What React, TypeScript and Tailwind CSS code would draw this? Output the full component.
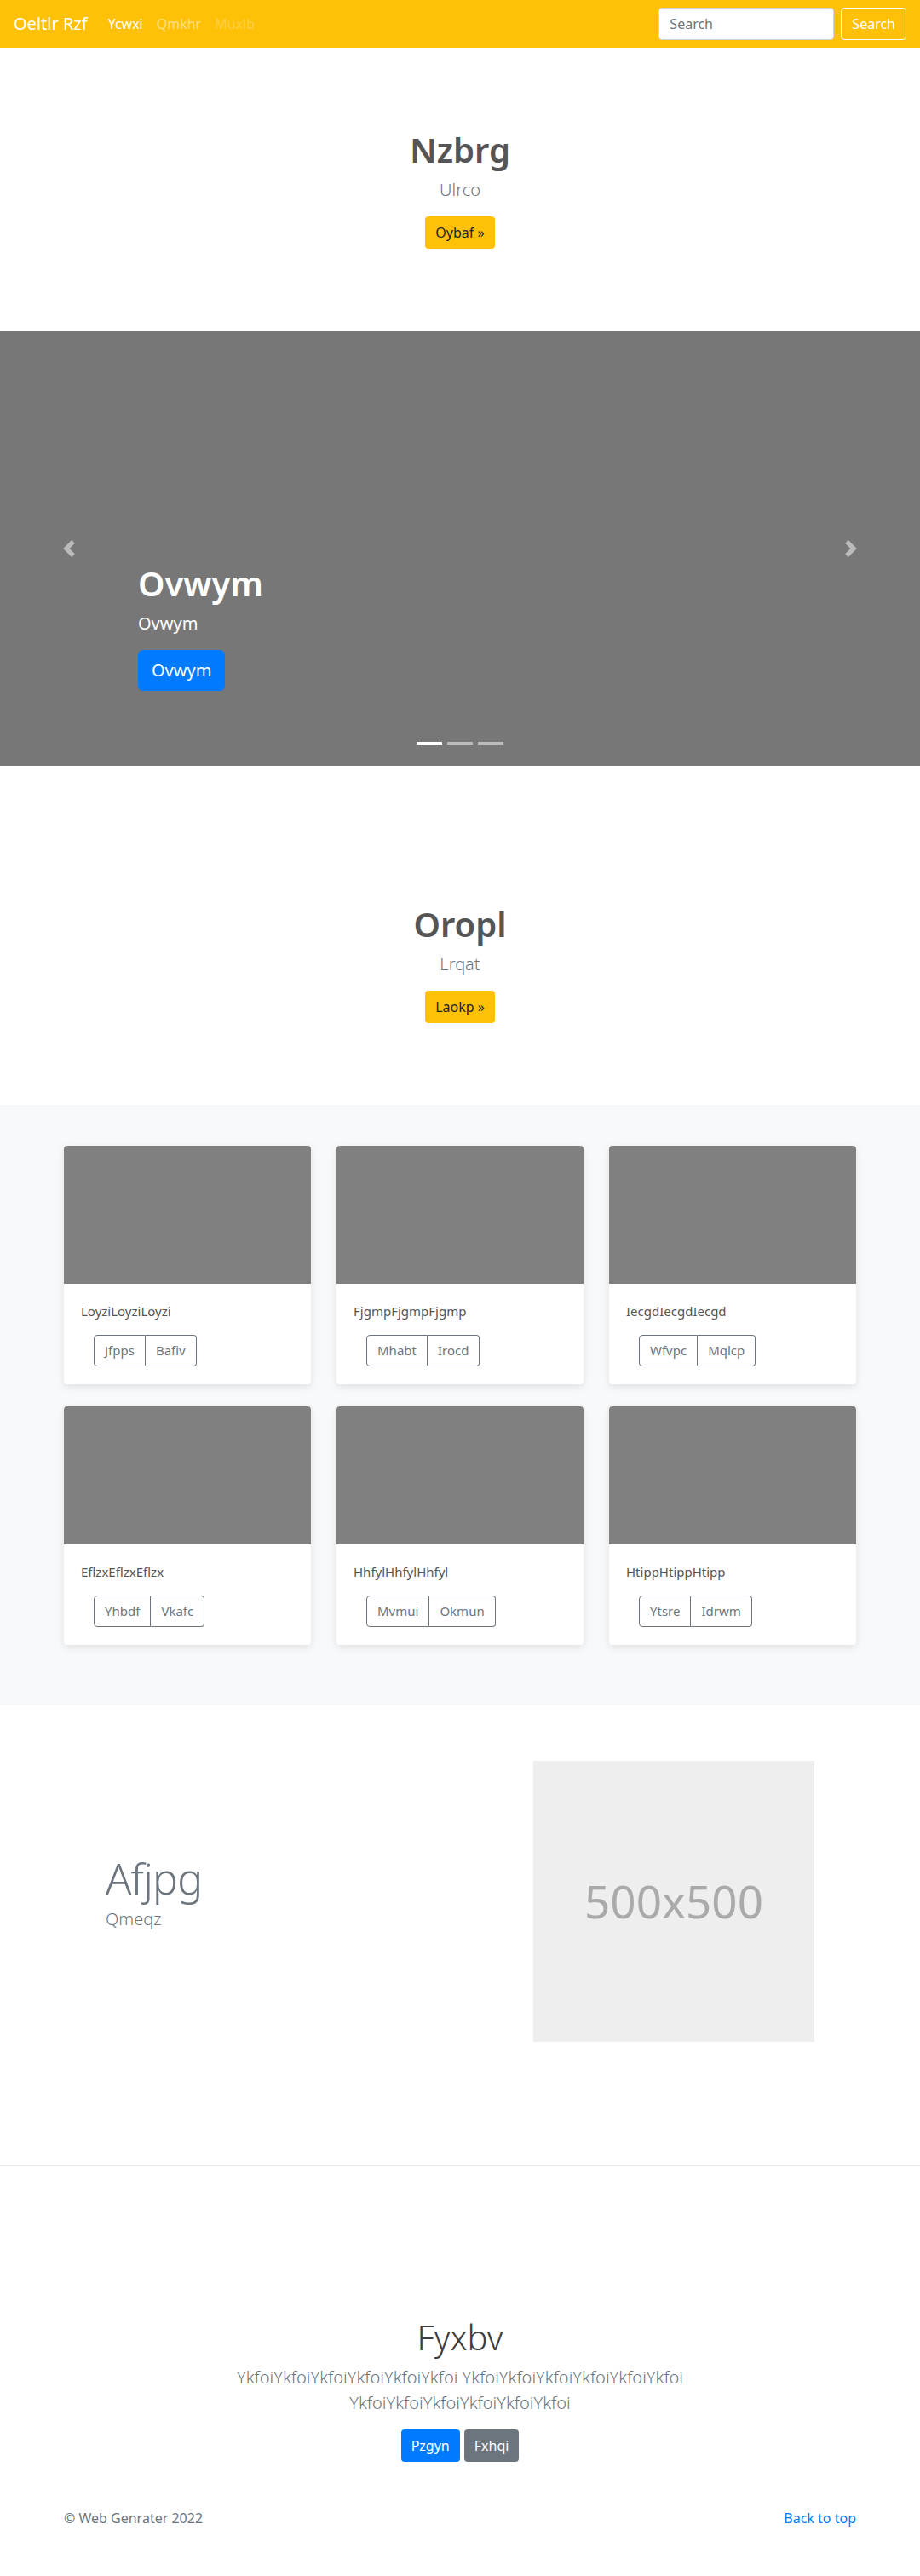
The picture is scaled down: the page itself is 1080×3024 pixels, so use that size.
import React from "react";

const font = { fontFamily: '"Noto Sans", "Open Sans", sans-serif' };

function Chevron({ dir }: { dir: "left" | "right" }) {
  return (
    <svg width="20" height="20" viewBox="0 0 8 8" fill="#fff" className="opacity-50">
      {dir === "left" ? (
        <path d="M5.25 0l-4 4 4 4 1.5-1.5L4.25 4l2.5-2.5L5.25 0z" />
      ) : (
        <path d="M2.75 0l-1.5 1.5L3.75 4l-2.5 2.5L2.75 8l4-4-4-4z" />
      )}
    </svg>
  );
}

const cards = [
  { title: "LoyziLoyziLoyzi", a: "Jfpps", b: "Bafiv" },
  { title: "FjgmpFjgmpFjgmp", a: "Mhabt", b: "Irocd" },
  { title: "IecgdIecgdIecgd", a: "Wfvpc", b: "Mqlcp" },
  { title: "EflzxEflzxEflzx", a: "Yhbdf", b: "Vkafc" },
  { title: "HhfylHhfylHhfyl", a: "Mvmui", b: "Okmun" },
  { title: "HtippHtippHtipp", a: "Ytsre", b: "Idrwm" },
];

export default function App() {
  return (
    <div style={font} className="w-[1080px] bg-white text-[#212529]">
      {/* Navbar */}
      <nav className="h-14 bg-[#ffc107] flex items-center px-4">
        <a className="text-[20px] leading-[30px] text-white mr-4">Oeltlr Rzf</a>
        <ul className="flex text-[16px] leading-6">
          <li className="px-2 text-white">Ycwxi</li>
          <li className="px-2 text-white/50">Qmkhr</li>
          <li className="px-2 text-white/25">Muxlb</li>
        </ul>
        <div className="ml-auto flex items-center gap-2">
          <input
            placeholder="Search"
            className="w-[206px] h-[38px] bg-white border border-[#ced4da] rounded px-3 text-[16px] text-[#495057] placeholder:text-[#6c757d] outline-none"
          />
          <button className="h-[38px] px-3 border border-white rounded text-white text-[16px]">
            Search
          </button>
        </div>
      </nav>

      {/* Hero 1 */}
      <section className="pt-24 pb-24 text-center">
        <h1 className="text-[40px] leading-[48px] font-semibold text-[#555] mb-2">Nzbrg</h1>
        <p className="text-[20px] leading-[30px] font-light text-[#6c757d] mb-4">Ulrco</p>
        <a className="inline-block bg-[#ffc107] text-[#212529] text-[16px] leading-6 px-3 py-[7px] rounded">
          Oybaf »
        </a>
      </section>

      {/* Carousel */}
      <section className="relative h-[511px] bg-[#777]">
        <div className="absolute left-0 top-0 bottom-0 w-[15%] flex items-center justify-center">
          <Chevron dir="left" />
        </div>
        <div className="absolute right-0 top-0 bottom-0 w-[15%] flex items-center justify-center">
          <Chevron dir="right" />
        </div>
        <div className="absolute left-[162px] top-[273px] text-white">
          <h1 className="text-[40px] leading-[48px] font-semibold mb-2">Ovwym</h1>
          <p className="text-[20px] leading-[30px] mb-4">Ovwym</p>
          <a className="inline-block bg-[#007bff] text-white text-[20px] leading-[30px] px-4 py-[9px] rounded-md">
            Ovwym
          </a>
        </div>
        <div className="absolute left-0 right-0 bottom-[25px] flex justify-center gap-[6px]">
          <span className="w-[30px] h-[3px] bg-white" />
          <span className="w-[30px] h-[3px] bg-white/50" />
          <span className="w-[30px] h-[3px] bg-white/50" />
        </div>
      </section>

      {/* Hero 2 */}
      <section className="pt-[162px] pb-24 text-center">
        <h1 className="text-[40px] leading-[48px] font-semibold text-[#555] mb-2">Oropl</h1>
        <p className="text-[20px] leading-[30px] font-light text-[#6c757d] mb-4">Lrqat</p>
        <a className="inline-block bg-[#ffc107] text-[#212529] text-[16px] leading-6 px-3 py-[7px] rounded">
          Laokp »
        </a>
      </section>

      {/* Cards */}
      <section className="bg-[#f8f9fa] pt-[48px] pb-[71px]">
        <div className="w-[960px] mx-auto px-[15px] grid grid-cols-3 gap-x-[30px] gap-y-[26px]">
          {cards.map((c) => (
            <div
              key={c.title}
              className="bg-white rounded overflow-hidden shadow-[0_3px_10px_rgba(0,0,0,0.1)]"
            >
              <div className="h-[162px] bg-[#808080]" />
              <div className="px-5 pt-5 pb-[21px]">
                <p className="text-[15px] leading-6 text-[#555] mb-4">{c.title}</p>
                <div className="ml-[15px] inline-flex text-[15px] leading-[21px] text-[#6c757d]">
                  <span className="px-3 py-[7px] border border-[#6c757d] rounded-l">{c.a}</span>
                  <span className="px-3 py-[7px] border border-l-0 border-[#6c757d] rounded-r">{c.b}</span>
                </div>
              </div>
            </div>
          ))}
        </div>
      </section>

      {/* Featurette */}
      <section className="pt-[65px] pb-[145px] px-[124px] flex items-center justify-between">
        <div>
          <h2 className="text-[50px] leading-[50px] font-light tracking-[-0.8px] text-[#6c757d] mb-2">
            Afjpg
          </h2>
          <p className="text-[20px] leading-[30px] font-light text-[#6c757d] mb-4">Qmeqz</p>
        </div>
        <div className="w-[330px] h-[330px] bg-[#eee] flex items-center justify-center">
          <span className="text-[53px] text-[#aaa]">500x500</span>
        </div>
      </section>

      <hr className="border-0 border-t border-black/10" />

      {/* Album heading */}
      <section className="pt-[177px] text-center">
        <h1 className="text-[40px] leading-[48px] font-light text-[#3d3d3d] mb-2">Fyxbv</h1>
        <p className="max-w-[610px] mx-auto text-[20px] leading-[30px] font-light text-[#6c757d] mb-4">
          YkfoiYkfoiYkfoiYkfoiYkfoiYkfoi YkfoiYkfoiYkfoiYkfoiYkfoiYkfoi YkfoiYkfoiYkfoiYkfoiYkfoiYkfoi
        </p>
        <div className="flex justify-center gap-[5px] my-2">
          <a className="bg-[#007bff] text-white text-[16px] leading-6 px-3 py-[7px] rounded">Pzgyn</a>
          <a className="bg-[#6c757d] text-white text-[16px] leading-6 px-3 py-[7px] rounded">Fxhqi</a>
        </div>
      </section>

      {/* Footer */}
      <footer className="pt-[46px] pb-[50px]">
        <div className="w-[960px] mx-auto px-[15px] flex justify-between text-[16px] leading-6">
          <span className="text-[#6c757d]">© Web Genrater 2022</span>
          <a className="text-[#007bff]">Back to top</a>
        </div>
      </footer>
    </div>
  );
}
